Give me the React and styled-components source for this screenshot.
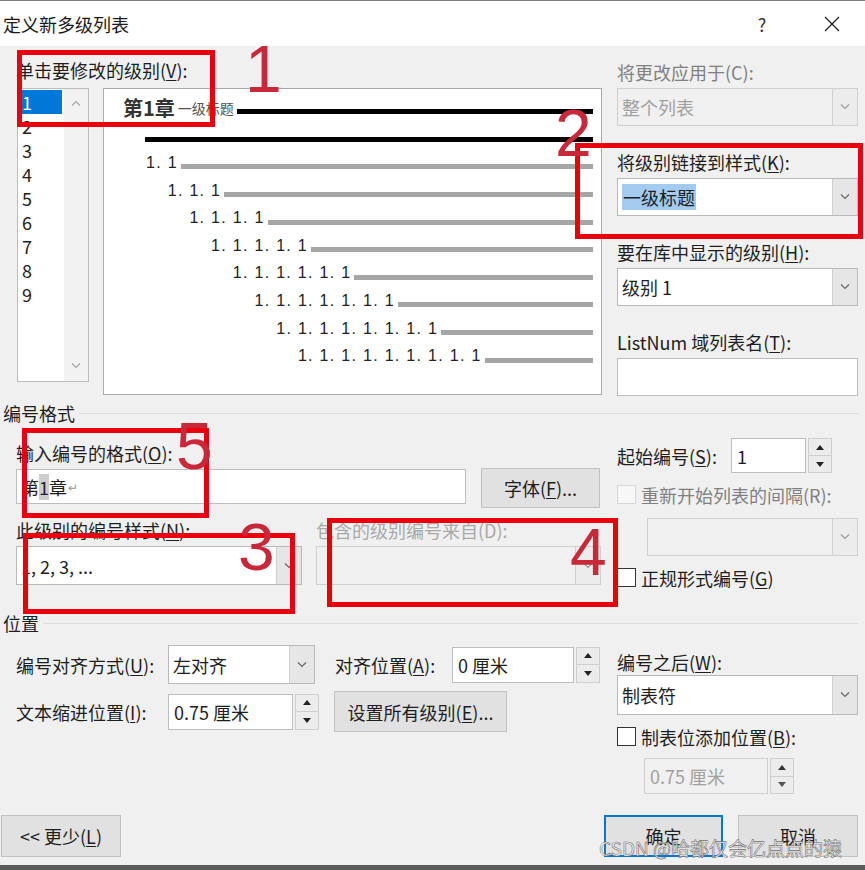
import React from "react";
import styled, { createGlobalStyle } from "styled-components";

const FONT = `"Noto Sans CJK SC", "Liberation Sans", sans-serif`;

const GlobalStyle = createGlobalStyle`
  html, body {
    margin: 0;
    padding: 0;
    background: #f0f0f0;
  }
  * {
    box-sizing: border-box;
  }
  u {
    text-decoration-thickness: 1px;
    text-underline-offset: 2px;
  }
`;

const Window = styled.div`
  position: relative;
  width: 865px;
  height: 870px;
  background: #f0f0f0;
  border-bottom: 5px solid #5c5c5c;
  display: flex;
  flex-direction: column;
  overflow: hidden;
  font-family: ${FONT};
  font-size: 18px;
  color: #1e1e1e;
`;

const TitleBar = styled.div`
  height: 46px;
  border-top: 1px solid #7f7f7f;
  background: #ffffff;
  display: flex;
  align-items: center;
  padding: 0 13px 0 3px;
`;

const Title = styled.div`
  line-height: 22px;
  color: #1a1a1a;
`;

const TitleButtons = styled.div`
  margin-left: auto;
  display: flex;
  gap: 30px;
`;

const TitleIcon = styled.div`
  width: 40px;
  height: 40px;
  display: flex;
  align-items: center;
  justify-content: center;
  color: #333;
  font-size: 18px;
`;

const Body = styled.div`
  flex: 1;
  display: flex;
  flex-direction: column;
  padding: 14px 7px 0 16px;
`;

const Label = styled.div`
  line-height: 20px;
  white-space: nowrap;
  width: ${(p) => (p.$w ? `${p.$w}px` : "auto")};
  margin-left: ${(p) => p.$ml || 0}px;
  flex-shrink: 0;
  color: ${(p) =>
    p.$tone === "muted" ? "#808080" : p.$tone === "faint" ? "#a9a9a9" : "#1e1e1e"};
`;

const TopSection = styled.div`
  display: flex;
  gap: 15px;
`;

const LeftTop = styled.div`
  width: 586px;
`;

const LevelRow = styled.div`
  display: flex;
  align-items: flex-start;
  gap: 14px;
  margin-top: 8px;
`;

const LevelList = styled.div`
  width: 72px;
  height: 294px;
  margin-left: 1px;
  background: #fff;
  border: 1px solid #bdbdbd;
  display: flex;
`;

const LevelItems = styled.div`
  padding: 1px 0 0 1px;
`;

const LevelItem = styled.div`
  width: 43px;
  height: 24px;
  line-height: 24px;
  padding-left: 3px;
  background: ${(p) => (p.$selected ? "#0078d7" : "transparent")};
  color: ${(p) => (p.$selected ? "#fff" : "#1e1e1e")};
`;

const ScrollTrack = styled.div`
  width: 24px;
  margin-left: auto;
  background: #f2f2f2;
  display: flex;
  flex-direction: column;
  justify-content: space-between;
  align-items: center;
  padding: 11px 0 12px;
`;

const Preview = styled.div`
  width: 499px;
  height: 307px;
  background: #fff;
  border: 1px solid #a9a9a9;
  padding: 5px 8px 0 0;
  display: flex;
  flex-direction: column;
`;

const PreviewRow = styled.div`
  height: 27.6px;
  display: flex;
  align-items: center;
  padding-left: ${(p) => p.$indent}px;
`;

const Chapter = styled.span`
  font-size: 20px;
  font-weight: 700;
  color: #333;
  line-height: 24px;
`;

const ChapterNote = styled.span`
  font-size: 14px;
  color: #555;
  margin-left: 3px;
  line-height: 18px;
`;

const NumText = styled.span`
  font-family: "Liberation Sans", sans-serif;
  font-size: 16px;
  letter-spacing: 1.3px;
  color: #222;
  white-space: nowrap;
  line-height: 20px;
`;

const Bar = styled.div`
  flex: 1;
  height: 5px;
  margin-top: 8px;
  margin-left: ${(p) => p.$gap}px;
  background: ${(p) => (p.$dark ? "#000" : "#a6a6a6")};
`;

const RightColumn = styled.div`
  width: 241px;
  display: flex;
  flex-direction: column;
  padding-top: ${(p) => p.$pt || 0}px;
  gap: ${(p) => p.$gap || 0}px;
`;

const Field = styled.div`
  display: flex;
  flex-direction: column;
  width: ${(p) => (p.$w ? `${p.$w}px` : "auto")};
`;

const ComboFrame = styled.div`
  display: flex;
  width: ${(p) => (p.$w ? `${p.$w}px` : "100%")};
  height: ${(p) => p.$h}px;
  margin-top: ${(p) => p.$mt || 0}px;
  margin-left: ${(p) => p.$ml || 0}px;
  flex-shrink: 0;
  background: ${(p) => (p.$disabled ? "#f0f0f0" : "#fff")};
  border: 1px solid ${(p) => (p.$disabled ? "#d0d0d0" : "#b9b9b9")};
  color: ${(p) => (p.$disabled ? "#a0a0a0" : "#1e1e1e")};
`;

const ComboText = styled.div`
  flex: 1;
  display: flex;
  align-items: center;
  padding-left: 4px;
  white-space: nowrap;
  overflow: hidden;
`;

const ComboButton = styled.div`
  width: 25px;
  display: flex;
  align-items: center;
  justify-content: center;
  background: ${(p) => (p.$disabled ? "#ececec" : "#e6e6e6")};
  border-left: 1px solid #d0d0d0;
`;

const Highlight = styled.span`
  background: #a3cbef;
  padding: 0 1px;
`;

const SpinFrame = styled.div`
  display: flex;
  width: ${(p) => p.$w}px;
  height: ${(p) => p.$h}px;
  margin-top: ${(p) => p.$mt || 0}px;
  margin-left: ${(p) => p.$ml || 0}px;
  flex-shrink: 0;
`;

const SpinField = styled.div`
  flex: 1;
  display: flex;
  align-items: center;
  padding-left: 5px;
  background: ${(p) => (p.$disabled ? "#f0f0f0" : "#fff")};
  border: 1px solid ${(p) => (p.$disabled ? "#d0d0d0" : "#bdbdbd")};
  color: ${(p) => (p.$disabled ? "#a0a0a0" : "#1e1e1e")};
  white-space: nowrap;
`;

const SpinArrows = styled.div`
  width: 24px;
  margin-left: 2px;
  display: flex;
  flex-direction: column;
`;

const SpinCell = styled.div`
  flex: 1;
  display: flex;
  align-items: center;
  justify-content: center;
  background: #ececec;
  border: 1px solid #cfcfcf;
  & + & {
    border-top: none;
  }
`;

const TextInput = styled.div`
  width: ${(p) => p.$w}px;
  height: ${(p) => p.$h}px;
  margin-top: ${(p) => p.$mt || 0}px;
  background: #fff;
  border: 1px solid #bdbdbd;
  display: flex;
  align-items: center;
  padding-left: 4px;
  white-space: nowrap;
`;

const FieldCode = styled.span`
  background: #cdcdcd;
`;

const ReturnMark = styled.span`
  font-size: 12px;
  color: #999;
  margin-left: 1px;
`;

const Button = styled.div`
  width: ${(p) => p.$w}px;
  height: ${(p) => p.$h}px;
  margin-left: ${(p) => p.$ml || 0}px;
  flex-shrink: 0;
  display: flex;
  align-items: center;
  justify-content: center;
  background: #e1e1e1;
  border: ${(p) => (p.$default ? "2px solid #0078d7" : "1px solid #c2c2c2")};
  color: #1e1e1e;
  white-space: nowrap;
`;

const SectionHeader = styled.div`
  display: flex;
  align-items: center;
  gap: 4px;
  height: 22px;
  margin: ${(p) => p.$mt}px 0 0 -13px;
  line-height: 22px;
`;

const Rule = styled.div`
  flex: 1;
  height: 1px;
  background: #dcdcdc;
`;

const Section = styled.div`
  display: flex;
  gap: 15px;
  margin-top: ${(p) => p.$mt}px;
`;

const LeftArea = styled.div`
  width: 586px;
  display: flex;
  flex-direction: column;
  padding-top: ${(p) => p.$pt || 0}px;
  gap: ${(p) => p.$gap || 0}px;
`;

const Row = styled.div`
  display: flex;
  align-items: ${(p) => p.$align || "center"};
  gap: ${(p) => p.$gap || 0}px;
  margin-top: ${(p) => p.$mt || 0}px;
  height: ${(p) => (p.$h ? `${p.$h}px` : "auto")};
`;

const CheckRow = styled.div`
  display: flex;
  align-items: center;
  gap: 5px;
  margin-top: ${(p) => p.$mt || 0}px;
  height: 19px;
`;

const Checkbox = styled.div`
  width: 19px;
  height: 19px;
  flex-shrink: 0;
  background: ${(p) => (p.$disabled ? "#f7f7f7" : "#fff")};
  border: 1px solid ${(p) => (p.$disabled ? "#d6d6d6" : "#333")};
`;

const Footer = styled.div`
  display: flex;
  align-items: center;
  gap: 15px;
  margin-top: 21px;
`;

const BackButton = styled(Button)`
  margin-left: -15px;
  margin-right: auto;
`;

const Watermark = styled.div`
  position: absolute;
  left: 599px;
  top: 836px;
  font-size: 19px;
  line-height: 24px;
  color: #fbfbfb;
  -webkit-text-stroke: 0.6px #6e6e6e;
  white-space: nowrap;
  pointer-events: none;
`;

const RedBox = styled.div`
  position: absolute;
  left: ${(p) => p.$x}px;
  top: ${(p) => p.$y}px;
  width: ${(p) => p.$w}px;
  height: ${(p) => p.$h}px;
  border: 5px solid #e8000d;
  pointer-events: none;
`;

const RedNumber = styled.div`
  position: absolute;
  left: ${(p) => p.$x}px;
  top: ${(p) => p.$y}px;
  font-family: "Liberation Sans", sans-serif;
  font-size: 66px;
  line-height: 66px;
  color: #c8283a;
  pointer-events: none;
`;

const Chevron = ({ up, color = "#666" }) => (
  <svg width="10" height="6" viewBox="0 0 10 6">
    <polyline
      points={up ? "1,5.5 5,1.5 9,5.5" : "1,0.5 5,4.5 9,0.5"}
      fill="none"
      stroke={color}
      strokeWidth="1.2"
    />
  </svg>
);

const Triangle = ({ up, color = "#222" }) => (
  <svg width="8" height="5" viewBox="0 0 8 5">
    <polygon points={up ? "0,5 4,0 8,5" : "0,0 8,0 4,5"} fill={color} />
  </svg>
);

const Combo = ({ children, disabled, w, h = 38, mt, ml }) => (
  <ComboFrame $disabled={disabled} $w={w} $h={h} $mt={mt} $ml={ml}>
    <ComboText>{children}</ComboText>
    <ComboButton $disabled={disabled}>
      <Chevron color={disabled ? "#9a9a9a" : "#666"} />
    </ComboButton>
  </ComboFrame>
);

const Spin = ({ children, disabled, w, h = 36, mt, ml }) => (
  <SpinFrame $w={w} $h={h} $mt={mt} $ml={ml}>
    <SpinField $disabled={disabled}>{children}</SpinField>
    <SpinArrows>
      <SpinCell>
        <Triangle up color={disabled ? "#333" : "#222"} />
      </SpinCell>
      <SpinCell>
        <Triangle color={disabled ? "#555" : "#222"} />
      </SpinCell>
    </SpinArrows>
  </SpinFrame>
);

const previewLevels = [2, 3, 4, 5, 6, 7, 8, 9].map((n) => ({
  n,
  text: Array(n).fill("1").join(". "),
  indent: 42 + (n - 2) * 21.7,
}));

const annotations = [
  { id: "1", box: [17, 50, 198, 77], num: [245, 36] },
  { id: "2", box: [575, 143, 288, 96], num: [555, 100] },
  { id: "5", box: [22, 428, 187, 90], num: [176, 413] },
  { id: "3", box: [23, 533, 272, 81], num: [238, 514] },
  { id: "4", box: [327, 518, 291, 89], num: [570, 519] },
];

export default function App() {
  return (
    <>
      <GlobalStyle />
      <Window>
        <TitleBar>
          <Title>定义新多级列表</Title>
          <TitleButtons>
            <TitleIcon>?</TitleIcon>
            <TitleIcon>
              <svg width="16" height="16" viewBox="0 0 16 16">
                <path d="M1 1 L15 15 M15 1 L1 15" stroke="#222" strokeWidth="1.3" />
              </svg>
            </TitleIcon>
          </TitleButtons>
        </TitleBar>

        <Body>
          <TopSection>
            <LeftTop>
              <Label>
                单击要修改的级别(<u>V</u>):
              </Label>
              <LevelRow>
                <LevelList>
                  <LevelItems>
                    {[1, 2, 3, 4, 5, 6, 7, 8, 9].map((n) => (
                      <LevelItem key={n} $selected={n === 1}>
                        {n}
                      </LevelItem>
                    ))}
                  </LevelItems>
                  <ScrollTrack>
                    <Chevron up color="#a8a8a8" />
                    <Chevron color="#a8a8a8" />
                  </ScrollTrack>
                </LevelList>
                <Preview>
                  <PreviewRow $indent={19}>
                    <Chapter>第1章</Chapter>
                    <ChapterNote>一级标题</ChapterNote>
                    <Bar $dark $gap={3} />
                  </PreviewRow>
                  <PreviewRow $indent={41}>
                    <Bar $dark $gap={0} />
                  </PreviewRow>
                  {previewLevels.map((lv) => (
                    <PreviewRow key={lv.n} $indent={lv.indent}>
                      <NumText>{lv.text}</NumText>
                      <Bar $gap={3} />
                    </PreviewRow>
                  ))}
                </Preview>
              </LevelRow>
            </LeftTop>

            <RightColumn $pt={2} $gap={26}>
              <Field>
                <Label $tone="muted">将更改应用于(C):</Label>
                <Combo disabled mt={6}>
                  整个列表
                </Combo>
              </Field>
              <Field>
                <Label>
                  将级别链接到样式(<u>K</u>):
                </Label>
                <Combo mt={6}>
                  <Highlight>一级标题</Highlight>
                </Combo>
              </Field>
              <Field>
                <Label>
                  要在库中显示的级别(<u>H</u>):
                </Label>
                <Combo mt={6}>级别 1</Combo>
              </Field>
              <Field>
                <Label>
                  ListNum 域列表名(<u>T</u>):
                </Label>
                <TextInput $w={241} $h={38} $mt={6} />
              </Field>
            </RightColumn>
          </TopSection>

          <SectionHeader $mt={6}>
            <span>编号格式</span>
            <Rule />
          </SectionHeader>

          <Section $mt={14}>
            <LeftArea $pt={5}>
              <Label>
                输入编号的格式(<u>O</u>):
              </Label>
              <Row $align="flex-start" $gap={15} $mt={5}>
                <TextInput $w={450} $h={35} $mt={1}>
                  第<FieldCode>1</FieldCode>章<ReturnMark>↵</ReturnMark>
                </TextInput>
                <Button $w={119} $h={40}>
                  字体(<u>F</u>)...
                </Button>
              </Row>
              <Row $align="flex-start" $gap={14} $mt={12}>
                <Field $w={286}>
                  <Label>
                    此级别的编号样式(<u>N</u>):
                  </Label>
                  <Combo mt={6} h={39}>
                    1, 2, 3, ...
                  </Combo>
                </Field>
                <Field $w={285}>
                  <Label $tone="faint">包含的级别编号来自(D):</Label>
                  <Combo disabled mt={6} h={39} />
                </Field>
              </Row>
            </LeftArea>

            <RightColumn>
              <Row $h={35}>
                <Label $w={114}>
                  起始编号(<u>S</u>):
                </Label>
                <Spin w={101} h={35}>
                  1
                </Spin>
              </Row>
              <CheckRow $mt={12}>
                <Checkbox $disabled />
                <Label $tone="muted">重新开始列表的间隔(R):</Label>
              </CheckRow>
              <Combo disabled w={211} ml={30} mt={14} />
              <CheckRow $mt={12}>
                <Checkbox />
                <Label>
                  正规形式编号(<u>G</u>)
                </Label>
              </CheckRow>
            </RightColumn>
          </Section>

          <SectionHeader $mt={25}>
            <span>位置</span>
            <Rule />
          </SectionHeader>

          <Section $mt={11}>
            <LeftArea $gap={7}>
              <Row $h={39}>
                <Label $w={152}>
                  编号对齐方式(<u>U</u>):
                </Label>
                <Combo w={147} h={39}>
                  左对齐
                </Combo>
                <Label $w={117} $ml={20}>
                  对齐位置(<u>A</u>):
                </Label>
                <Spin w={148}>0 厘米</Spin>
              </Row>
              <Row $h={41}>
                <Label $w={152}>
                  文本缩进位置(<u>I</u>):
                </Label>
                <Spin w={151}>0.75 厘米</Spin>
                <Button $w={173} $h={41} $ml={15}>
                  设置所有级别(<u>E</u>)...
                </Button>
              </Row>
            </LeftArea>

            <RightColumn $pt={7}>
              <Label>
                编号之后(<u>W</u>):
              </Label>
              <Combo mt={3} h={40}>
                制表符
              </Combo>
              <CheckRow $mt={12}>
                <Checkbox />
                <Label>
                  制表位添加位置(<u>B</u>):
                </Label>
              </CheckRow>
              <Spin disabled w={150} ml={27} mt={12}>
                0.75 厘米
              </Spin>
            </RightColumn>
          </Section>

          <Footer>
            <BackButton $w={120} $h={42}>
              &lt;&lt; 更少(<u>L</u>)
            </BackButton>
            <Button $w={119} $h={42} $default>
              确定
            </Button>
            <Button $w={120} $h={42}>
              取消
            </Button>
          </Footer>
        </Body>

        {annotations.map((a) => (
          <React.Fragment key={a.id}>
            <RedBox $x={a.box[0]} $y={a.box[1]} $w={a.box[2]} $h={a.box[3]} />
            <RedNumber $x={a.num[0]} $y={a.num[1]}>
              {a.id}
            </RedNumber>
          </React.Fragment>
        ))}

        <Watermark>CSDN @哈都仅会亿点点的猿</Watermark>
      </Window>
    </>
  );
}
